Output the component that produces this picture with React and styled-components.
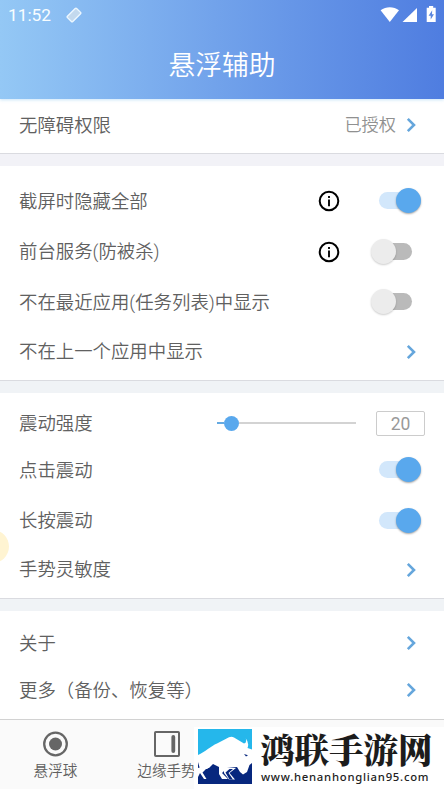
import React, { useState } from 'react';
import styled, { createGlobalStyle } from 'styled-components';

const App = () => {
  const [checked, setChecked] = useState({
    hideAll: true,
    foreground: false,
    recents: false,
    click: true,
    longPress: true,
  });
  const strength = 20;

  const renderSwitch = (key) => (
    <Switch
      role="switch"
      aria-checked={checked[key]}
      onClick={() => setChecked({ ...checked, [key]: !checked[key] })}
    >
      <SwitchTrack $on={checked[key]} />
      <SwitchThumb $on={checked[key]} />
    </Switch>
  );

  return (
    <Screen>
      <GlobalStyle />
      <Header>
        <StatusBar>
          <Time>11:52</Time>
          <TagIcon />
          <StatusIcons />
        </StatusBar>
        <Title>悬浮辅助</Title>
      </Header>

      <Section $height={55}>
        <Row $height={52}>
          <Label>无障碍权限</Label>
          <Value>已授权</Value>
          <Chevron />
        </Row>
      </Section>
      <Divider $height={12} $cool={false} />

      <Section $height={215} $top={9}>
        <Row $height={52}>
          <Label>截屏时隐藏全部</Label>
          <InfoIcon />
          {renderSwitch('hideAll')}
        </Row>
        <Row $height={49}>
          <Label>前台服务(防被杀)</Label>
          <InfoIcon />
          {renderSwitch('foreground')}
        </Row>
        <Row $height={52}>
          <Label>不在最近应用(任务列表)中显示</Label>
          {renderSwitch('recents')}
        </Row>
        <Row $height={47}>
          <Label>不在上一个应用中显示</Label>
          <Chevron />
        </Row>
      </Section>
      <Divider $height={12} $cool />

      <Section $height={206} $top={7}>
        <Row $height={46}>
          <Label>震动强度</Label>
          <Slider>
            <SliderFill />
            <SliderThumb />
            <SliderRest />
          </Slider>
          <NumberBox>{strength}</NumberBox>
        </Row>
        <Row $height={48}>
          <Label>点击震动</Label>
          {renderSwitch('click')}
        </Row>
        <Row $height={53}>
          <Label>长按震动</Label>
          {renderSwitch('longPress')}
        </Row>
        <Row $height={45}>
          <Label>手势灵敏度</Label>
          <Chevron />
        </Row>
        <FloatingBall />
      </Section>
      <Divider $height={12} $cool />

      <Section $height={108} $top={8} $last>
        <Row $height={48}>
          <Label>关于</Label>
          <Chevron />
        </Row>
        <Row $height={46}>
          <Label>更多（备份、恢复等）</Label>
          <Chevron />
        </Row>
      </Section>

      <BottomNav>
        <NavItem>
          <BallIcon />
          <NavText>悬浮球</NavText>
        </NavItem>
        <NavItem>
          <EdgeIcon />
          <NavText>边缘手势</NavText>
        </NavItem>
        <Watermark>
          <BullLogo />
          <Brand>
            <BrandName>鸿联手游网</BrandName>
            <BrandUrl>www.henanhonglian95.com</BrandUrl>
          </Brand>
        </Watermark>
      </BottomNav>
    </Screen>
  );
};

// Icons
const TagIcon = () => (
  <svg width="16" height="16" viewBox="0 0 16 16">
    <rect x="1.5" y="4.2" width="13" height="7.6" rx="1" transform="rotate(-45 8 8)" fill="#c3d9ee" stroke="#eef8ff" strokeWidth="1.3" />
  </svg>
);

const StatusIcons = () => (
  <StatusSvg width="58" height="18" viewBox="0 0 58 18">
    <path d="M.6 4.3C6 .2 13.6 .2 19 4.3L9.8 16z" fill="#fff" />
    <path d="M37 2v14H22.5z" fill="#fff" />
    <path d="M49 0h4.2v1.8h2.5V16h-9V1.800H49z" fill="#fff" />
    <path d="M52.2 4.3L48.6 9.7h2.1v3.9l3.3-5.4h-2z" fill="#5a86df" />
  </StatusSvg>
);

const Chevron = () => (
  <ChevronSvg width="11" height="16" viewBox="0 0 11 16">
    <path d="M1.8 1.8L8 8l-6.2 6.2" fill="none" stroke="#65a6dc" strokeWidth="2.6" />
  </ChevronSvg>
);

const InfoIcon = () => (
  <InfoSvg width="22" height="22" viewBox="0 0 22 22">
    <circle cx="11" cy="11" r="9.3" fill="none" stroke="#000" strokeWidth="2" />
    <path d="M10 5.9h2v2.1h-2zM10 9.6h2v6.6h-2z" fill="#111" />
  </InfoSvg>
);

const BallIcon = () => (
  <svg width="26" height="26" viewBox="0 0 26 26">
    <circle cx="12.5" cy="13" r="11.3" fill="none" stroke="#666" strokeWidth="2.3" />
    <circle cx="12.5" cy="13" r="6.5" fill="#666" />
  </svg>
);

const EdgeIcon = () => (
  <svg width="26" height="26" viewBox="0 0 26 26">
    <rect x="1" y="1" width="24" height="24" rx="0.8" fill="none" stroke="#666" strokeWidth="2" />
    <path d="M19.3 6v14" stroke="#666" strokeWidth="3.8" strokeLinecap="round" />
  </svg>
);

const BullLogo = () => (
  <svg width="54" height="55" viewBox="0 0 54 55">
    <path d="M0 0h54v55H0z" fill="#25b7eb" />
    <path d="M0 33h54v22H0z" fill="#07277e" />
    <path
      d="M0 26C7 23 13 17 19 14.5L31 8.3Q33.5 7 36 8.500L46 14.5Q49 14 47.8 9.5Q51.5 14 49.5 19L54 20.5V34L51.500 36L49 43L45 45.500L42 43L39 38L29 39L24 44L30 50H24L21 45V38L15 35L11 39L2 40L0 33z"
      fill="#fff"
    />
    <path d="M0 39L4 38H11L6 43.500L11 50H6L2 44L0 48z" fill="#fff" />
    <path d="M26 39H38L31.5 44L37 50.5H31L26 44z" fill="#fff" />
    <path d="M4.5 43.5L8 40H11L7.500 43.500L11.500 50H8.500zM27.500 43.500L31.500 40H35L30.500 44L35 50.500H31.500z" fill="#07277e" />
    <path d="M46 25l4 1.3-2 1.2z" fill="#07277e" />
  </svg>
);

// Styles
const GlobalStyle = createGlobalStyle`
  * {
    box-sizing: border-box;
  }

  body {
    margin: 0;
    background: #fff;
    font-family: Roboto, "Noto Sans CJK SC", sans-serif;
    overflow: hidden;
  }
`;

const Screen = styled.div`
  display: flex;
  flex-direction: column;
  width: 444px;
  height: 789px;
  overflow: hidden;
`;

const Header = styled.header`
  height: 99px;
  flex-shrink: 0;
  background: linear-gradient(90deg, #94c8f5 0%, #72a3eb 48%, #4f7de0 100%);
  box-shadow: 0 1px 3px rgba(120, 190, 240, 0.4);
  z-index: 1;
`;

const StatusBar = styled.div`
  display: flex;
  align-items: center;
  height: 30px;
  padding: 0 6px 0 8px;
  gap: 13px;
`;

const Time = styled.span`
  font-size: 17.3px;
  font-weight: 400;
  line-height: 30px;
  color: #f8fdff;
  width: 45px;
  white-space: nowrap;
`;

const StatusSvg = styled.svg`
  margin-left: auto;
`;

const Title = styled.h1`
  margin: 18px 0 0;
  font-size: 26.8px;
  font-weight: 350;
  line-height: 36px;
  text-align: center;
  color: #fff;
`;

const Section = styled.section`
  position: relative;
  flex-shrink: 0;
  height: ${({ $height }) => $height}px;
  padding-top: ${({ $top = 0 }) => $top}px;
  background: #fff;
  border-bottom: ${({ $last }) => ($last ? 'none' : '1px solid #dadbe0')};
`;

const Divider = styled.div`
  flex-shrink: 0;
  height: ${({ $height }) => $height}px;
  background: ${({ $cool }) => ($cool ? '#f0f3f6' : '#f2f2f7')};
`;

const Row = styled.div`
  display: flex;
  align-items: center;
  height: ${({ $height }) => $height}px;
  padding: 0 19px;
`;

const Label = styled.span`
  flex: 1;
  padding-top: 1px;
  font-size: 18.4px;
  font-weight: 350;
  line-height: 26px;
  white-space: nowrap;
  color: #606060;
`;

const Value = styled.span`
  margin-right: 10px;
  font-size: 17.2px;
  font-weight: 350;
  line-height: 24px;
  color: #909090;
`;

const ChevronSvg = styled.svg`
  margin-right: 8px;
`;

const InfoSvg = styled.svg`
  margin-right: 31px;
`;

const Switch = styled.div`
  position: relative;
  width: 51px;
  height: 26px;
  margin-right: 3px;
  cursor: pointer;
`;

const SwitchTrack = styled.div`
  width: 33px;
  height: 17px;
  margin: 4px 0 0 8px;
  border-radius: 9px;
  background: ${({ $on }) => ($on ? '#d2e7fb' : '#bababa')};
`;

const SwitchThumb = styled.div`
  position: absolute;
  top: 0;
  left: ${({ $on }) => ($on ? 25 : 0)}px;
  width: 25px;
  height: 25px;
  border-radius: 50%;
  background: ${({ $on }) => ($on ? '#59a8ed' : '#ececec')};
  box-shadow: 0 1px 2px rgba(0, 0, 0, ${({ $on }) => ($on ? 0.35 : 0.2)});
`;

const Slider = styled.div`
  display: flex;
  align-items: center;
  width: 139px;
  margin-right: 20px;
`;

const SliderFill = styled.div`
  width: 7px;
  height: 2px;
  background: #65aae2;
`;

const SliderThumb = styled.div`
  width: 15px;
  height: 15px;
  border-radius: 50%;
  background: #59a8ed;
`;

const SliderRest = styled.div`
  flex: 1;
  height: 2px;
  background: #d3d3d3;
`;

const NumberBox = styled.div`
  width: 49px;
  height: 25px;
  border: 1px solid #ccc;
  border-radius: 2px;
  font-size: 17.5px;
  line-height: 25px;
  text-align: center;
  color: #999;
`;

// Half hidden ball on the left edge of the screen
const FloatingBall = styled.div`
  position: absolute;
  left: -24px;
  top: 137px;
  width: 33px;
  height: 33px;
  border-radius: 50%;
  background: #fff4d2;
`;

const BottomNav = styled.nav`
  position: relative;
  display: flex;
  height: 70px;
  background: #fafafa;
  border-top: 1px solid #d2d2d2;
`;

const NavItem = styled.div`
  display: flex;
  flex-direction: column;
  align-items: center;
  width: 111px;
  padding-top: 11px;
`;

const NavText = styled.span`
  margin-top: 4px;
  font-size: 14.6px;
  font-weight: 350;
  line-height: 20px;
  color: #606060;
`;

const Watermark = styled.div`
  position: absolute;
  top: 7px;
  right: 0;
  bottom: 0;
  left: 194px;
  display: flex;
  padding: 2px 0 0 4px;
  background: #fff;
`;

const Brand = styled.div`
  margin-left: 8px;
`;

const BrandName = styled.div`
  font-family: "Noto Serif CJK SC", "Noto Sans CJK SC", serif;
  font-size: 34.5px;
  font-weight: 900;
  line-height: 38px;
  white-space: nowrap;
  color: #1c1c1c;
`;

const BrandUrl = styled.div`
  margin: 3px 0 0 1px;
  font-family: "Noto Sans", sans-serif;
  font-size: 11.3px;
  font-weight: 500;
  line-height: 14px;
  letter-spacing: 0.75px;
  color: #222;
`;

export default App;
